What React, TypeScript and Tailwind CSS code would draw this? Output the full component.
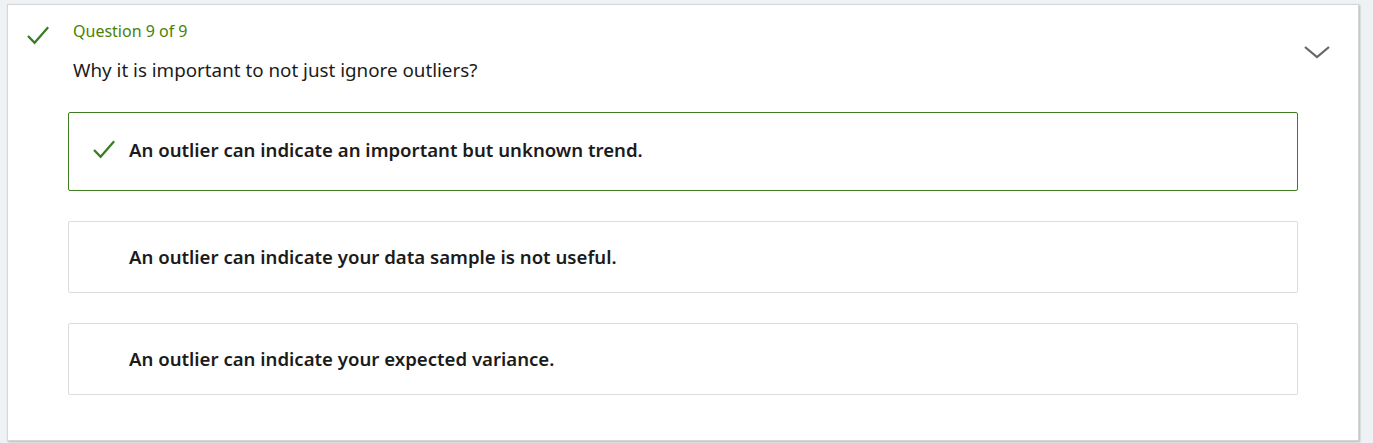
import React from "react";

function Check({ className }: { className?: string }) {
  return (
    <svg viewBox="0 0 22 20" className={className} fill="none" stroke="currentColor" strokeWidth="2.3" strokeLinecap="square">
      <path d="M1.8 10.8 L7.6 16.8 L20.4 2.2" />
    </svg>
  );
}

const options = [
  { text: "An outlier can indicate an important but unknown trend.", correct: true },
  { text: "An outlier can indicate your data sample is not useful.", correct: false },
  { text: "An outlier can indicate your expected variance.", correct: false },
];

export default function App() {
  return (
    <div
      className="w-[1373px] h-[443px] bg-[#eff2f5] pt-[4px] pl-[7px]"
      style={{ fontFamily: '"Segoe UI", "Noto Sans", sans-serif' }}
    >
      <div className="relative w-[1352px] h-[437px] bg-white border border-[#d6d6d6] shadow-[1px_1px_2px_rgba(0,0,0,0.25)]">
        <div className="flex pt-[16px]">
          <div className="w-[65px] flex justify-start pl-[19px] pt-[5px]">
            <Check className="w-[22px] h-[20px] text-[#3a7d23]" />
          </div>
          <div className="flex-1">
            <div className="text-[16px] leading-[20px] text-[#498205]">Question 9 of 9</div>
            <div className="mt-[16px] text-[18.8px] leading-[26px] text-[#1b1b1b]">
              Why it is important to not just ignore outliers?
            </div>
          </div>
        </div>
        <svg
          className="absolute left-[1295px] top-[39px] w-[28px] h-[16px] text-[#666]"
          viewBox="0 0 28 16"
          fill="none"
          stroke="currentColor"
          strokeWidth="2.2"
        >
          <path d="M2 3 L14 13 L26 3" />
        </svg>
        <div className="ml-[60px] mr-[60px] mt-[29px] flex flex-col gap-[30px]">
          {options.map((o, i) => (
            <div
              key={i}
              className={
                o.correct
                  ? "h-[79px] pb-[3px] rounded-[2px] border border-[#3d7c20] flex items-center"
                  : "h-[72px] rounded-[2px] border border-[#dcdcdc] flex items-center"
              }
            >
              <div className="w-[60px] flex justify-end pr-[14px]">
                {o.correct && <Check className="w-[22px] h-[20px] text-[#3a7d23]" />}
              </div>
              <div className="text-[18.6px] font-semibold text-[#1b1b1b]">{o.text}</div>
            </div>
          ))}
        </div>
      </div>
    </div>
  );
}
